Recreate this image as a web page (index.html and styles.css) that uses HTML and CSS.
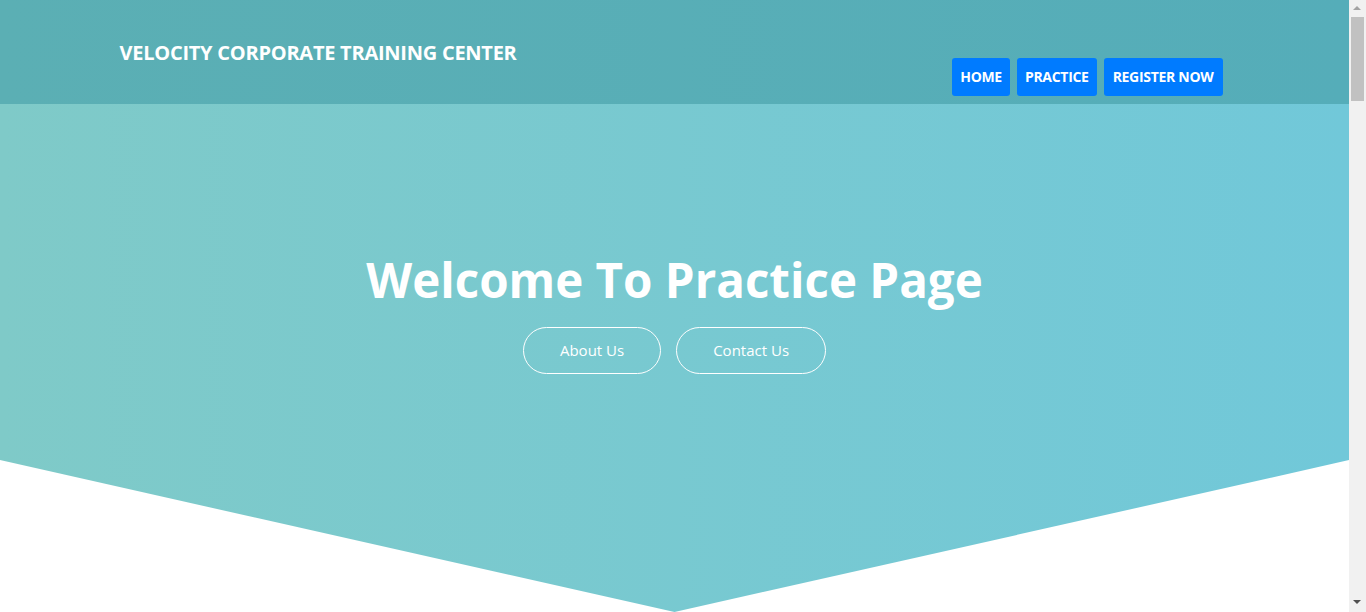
FILE: index.html
```html
<!DOCTYPE html>
<html lang="en">
<head>
<meta charset="utf-8">
<title>Velocity Corporate Training Center</title>
<link rel="stylesheet" href="styles.css">
</head>
<body>
<div class="page">
  <header class="site-header">
    <div class="container header-inner">
      <div class="brand">VELOCITY CORPORATE TRAINING CENTER</div>
      <nav class="nav">
        <a class="nav-btn" href="#">HOME</a>
        <a class="nav-btn" href="#">PRACTICE</a>
        <a class="nav-btn" href="#">REGISTER NOW</a>
      </nav>
    </div>
  </header>
  <section class="hero">
    <div class="hero-inner">
      <h1 class="hero-title">Welcome To Practice Page</h1>
      <div class="hero-actions">
        <a class="pill" href="#">About Us</a>
        <a class="pill" href="#">Contact Us</a>
      </div>
    </div>
  </section>
  <main class="below"></main>
</div>
<div class="scrollbar" aria-hidden="true">
  <span class="sb-arrow sb-up"></span>
  <span class="sb-thumb"></span>
  <span class="sb-arrow sb-down"></span>
</div>
</body>
</html>
```

FILE: styles.css
```css
* { box-sizing: border-box; }
html, body { margin: 0; padding: 0; }
html { scrollbar-width: none; }
html::-webkit-scrollbar { display: none; }
body {
  font-family: "Open Sans", "Noto Sans", sans-serif;
  background: #ffffff;
  color: #ffffff;
}
a { text-decoration: none; color: inherit; }

.page {
  margin-right: 17px;
}

.site-header {
  height: 104px;
  background: linear-gradient(to right, #5bafb4, #55adb9);
}
.container {
  max-width: 1140px;
  margin: 0 auto;
  padding: 0 15px;
}
.header-inner {
  display: flex;
  justify-content: space-between;
  align-items: flex-start;
  height: 104px;
}
.brand {
  margin-top: 40px;
  font-size: 20px;
  font-weight: 700;
  line-height: 26px;
  letter-spacing: -0.25px;
}
.nav {
  display: flex;
  gap: 7px;
  margin-top: 58px;
  margin-right: 7px;
}
.nav-btn {
  display: block;
  height: 38px;
  line-height: 38px;
  padding: 0 8px;
  background: #007bff;
  border-radius: 3px;
  font-size: 14px;
  font-weight: 700;
  letter-spacing: -0.3px;
}
.nav-btn:last-child {
  padding: 0 9px;
}

.hero {
  height: 508px;
  background: linear-gradient(to right, #7fcac8, #71c8d9);
  clip-path: polygon(0 0, 100% 0, 100% 70.1%, 50% 100%, 0 70.1%);
}
.hero-inner {
  display: flex;
  flex-direction: column;
  align-items: center;
  padding-top: 144px;
}
.hero-title {
  margin: 0;
  font-size: 47.5px;
  font-weight: 700;
  line-height: 64px;
}
.hero-actions {
  display: flex;
  gap: 15px;
  margin-top: 15px;
}
.pill {
  display: block;
  height: 47px;
  line-height: 45px;
  padding: 0 36px;
  border: 1px solid #ffffff;
  border-radius: 24px;
  font-size: 15px;
}
.below {
  display: block;
  height: 4300px;
}

.scrollbar {
  position: fixed;
  top: 0;
  right: 0;
  width: 17px;
  height: 100vh;
  background: #f1f1f1;
}
.sb-thumb {
  position: absolute;
  top: 17px;
  left: 2px;
  width: 13px;
  height: 84px;
  background: #c1c1c1;
}
.sb-arrow {
  position: absolute;
  left: 4px;
  width: 0;
  height: 0;
  border-left: 4px solid transparent;
  border-right: 4px solid transparent;
}
.sb-up {
  top: 6px;
  border-bottom: 4px solid #a3a3a3;
}
.sb-down {
  bottom: 8px;
  border-top: 4px solid #505050;
}
```
